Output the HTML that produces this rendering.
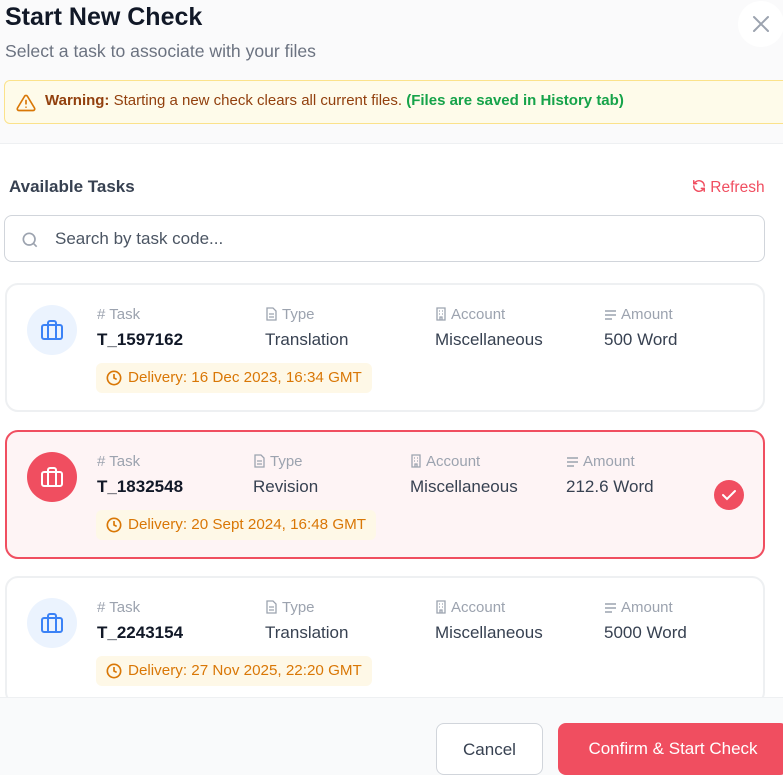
<!DOCTYPE html>
<html><head><style>
*{box-sizing:border-box;margin:0;padding:0}
body{width:783px;height:775px;overflow:hidden;font-family:"Liberation Sans",sans-serif;background:#fff;position:relative}
.hdr{position:absolute;left:0;top:0;width:783px;height:144px;background:#fafafb;border-bottom:1px solid #eef0f2}
h1{position:absolute;left:5px;top:3px;font-size:25px;font-weight:700;color:#111827}
.sub{position:absolute;left:5px;top:41px;font-size:17.6px;color:#6b7280}
.close{position:absolute;left:738px;top:1px;width:46px;height:46px;border-radius:50%;background:#fff}
.warn{position:absolute;left:4px;top:80px;width:785px;height:44px;background:#fefbea;border:1px solid #fbe28b;border-radius:6px;font-size:15px;color:#92400e}
.warn span.t{position:absolute;left:40px;top:11px;white-space:nowrap}
.at{position:absolute;left:9px;top:177px;font-size:17px;font-weight:700;color:#374151}
.ref{position:absolute;left:692px;top:179px;font-size:15.5px;color:#f04e60}
.search{position:absolute;left:4px;top:215px;width:761px;height:47px;border:1px solid #d1d5db;border-radius:8px}
.search span{position:absolute;left:50px;top:13px;font-size:17px;color:#4b5563}
.card{position:absolute;left:5px;width:760px;height:129px;border:2px solid #eef0f2;border-radius:13px;background:#fff}
.card.sel{background:#fef4f5;border-color:#f04e60}
.ic{position:absolute;left:20px;top:20px;width:50px;height:50px;border-radius:50%;background:#ebf3fe}
.sel .ic{background:#f04e60}
.ic svg{position:absolute;left:13px;top:13px}
.lab{position:absolute;top:21px;font-size:15px;color:#9ca3af;white-space:nowrap}
.lab svg{vertical-align:-2px;margin-right:4px}
.val{position:absolute;top:45px;font-size:17px;color:#374151;white-space:nowrap}
.val.b{font-weight:700;color:#111827}
.del{position:absolute;left:89px;top:78px;height:30px;padding:0 10px 0 32px;background:#fef8e7;border-radius:6px;font-size:15.2px;color:#d97706;line-height:30px;white-space:nowrap}
.del svg{position:absolute;left:10px;top:7px}
.foot{position:absolute;left:0;top:697px;width:783px;height:78px;background:#f9fafb;border-top:1px solid #eef0f2}
.btn{position:absolute;top:25px;height:52px;border-radius:8px;font-size:17px;line-height:52px;text-align:center}
</style></head><body>
<div class="hdr">
<h1>Start New Check</h1>
<div class="sub">Select a task to associate with your files</div>
<div class="close"><svg width="46" height="46"><path d="M16 16L30 30M30 16L16 30" stroke="#9ca3af" stroke-width="2" stroke-linecap="round"/></svg></div>
<div class="warn"><svg style="position:absolute;left:11px;top:12px" width="20" height="20" viewBox="0 0 24 24" fill="none" stroke="#d97706" stroke-width="2" stroke-linecap="round" stroke-linejoin="round"><path d="M10.3 3.9L1.8 18a2 2 0 0 0 1.7 3h17a2 2 0 0 0 1.7-3L13.7 3.9a2 2 0 0 0-3.4 0z"/><path d="M12 9v4M12 17h.01"/></svg><span class="t"><b>Warning:</b> Starting a new check clears all current files. <b style="color:#16a34a">(Files are saved in History tab)</b></span></div>
</div>
<div class="at">Available Tasks</div>
<div class="ref"><svg width="14" height="14" viewBox="0 0 24 24" fill="none" stroke="#f04e60" stroke-width="2.5" stroke-linecap="round" style="vertical-align:-1px"><path d="M21 12a9 9 0 0 0-15-6.7L3 8M3 3v5h5M3 12a9 9 0 0 0 15 6.7L21 16M21 21v-5h-5"/></svg> Refresh</div>
<div class="search"><svg style="position:absolute;left:15px;top:14px" width="20" height="20" viewBox="0 0 24 24" fill="none" stroke="#9ca3af" stroke-width="2"><circle cx="11" cy="11" r="7"/><path d="M20 20l-4-4"/></svg><span>Search by task code...</span></div>

<div class="card" style="top:283px">
<div class="ic"><svg width="24" height="24" viewBox="0 0 24 24" fill="none" stroke="#3b82f6" stroke-width="2" stroke-linejoin="round"><rect x="2" y="7" width="20" height="14" rx="2"/><path d="M16 21V5a2 2 0 0 0-2-2h-4a2 2 0 0 0-2 2v16"/></svg></div>
<div class="lab" style="left:90px"># Task</div><div class="val b" style="left:90px">T_1597162</div>
<div class="lab" style="left:258px"><svg width="13" height="14" viewBox="0 0 13 14" fill="none" stroke="#9ca3af" stroke-width="1.3"><path d="M2 1h6l3 3v9H2z M4 7h5M4 10h5"/></svg>Type</div><div class="val" style="left:258px">Translation</div>
<div class="lab" style="left:428px"><svg width="12" height="14" viewBox="0 0 12 14" fill="none" stroke="#9ca3af" stroke-width="1.3"><path d="M2 1h8v12H2z M4 4h1M7 4h1M4 7h1M7 7h1M5 13v-3h2v3"/></svg>Account</div><div class="val" style="left:428px">Miscellaneous</div>
<div class="lab" style="left:597px"><svg width="13" height="12" viewBox="0 0 13 12" stroke="#9ca3af" stroke-width="1.4"><path d="M1 2h11M1 6h11M1 10h7"/></svg>Amount</div><div class="val" style="left:597px">500 Word</div>
<div class="del"><svg width="16" height="16" viewBox="0 0 24 24" fill="none" stroke="#d97706" stroke-width="2.5"><circle cx="12" cy="12" r="10"/><path d="M12 6v6l4 2"/></svg>Delivery: 16 Dec 2023, 16:34 GMT</div>
</div>

<div class="card sel" style="top:430px">
<div class="ic"><svg width="24" height="24" viewBox="0 0 24 24" fill="none" stroke="#fff" stroke-width="2" stroke-linejoin="round"><rect x="2" y="7" width="20" height="14" rx="2"/><path d="M16 21V5a2 2 0 0 0-2-2h-4a2 2 0 0 0-2 2v16"/></svg></div>
<div class="lab" style="left:90px"># Task</div><div class="val b" style="left:90px">T_1832548</div>
<div class="lab" style="left:246px"><svg width="13" height="14" viewBox="0 0 13 14" fill="none" stroke="#9ca3af" stroke-width="1.3"><path d="M2 1h6l3 3v9H2z M4 7h5M4 10h5"/></svg>Type</div><div class="val" style="left:246px">Revision</div>
<div class="lab" style="left:403px"><svg width="12" height="14" viewBox="0 0 12 14" fill="none" stroke="#9ca3af" stroke-width="1.3"><path d="M2 1h8v12H2z M4 4h1M7 4h1M4 7h1M7 7h1M5 13v-3h2v3"/></svg>Account</div><div class="val" style="left:403px">Miscellaneous</div>
<div class="lab" style="left:559px"><svg width="13" height="12" viewBox="0 0 13 12" stroke="#9ca3af" stroke-width="1.4"><path d="M1 2h11M1 6h11M1 10h7"/></svg>Amount</div><div class="val" style="left:559px">212.6 Word</div>
<svg style="position:absolute;left:706px;top:47px" width="32" height="32"><circle cx="16" cy="16" r="15" fill="#f04e60"/><path d="M10 16l4 4 8-8" stroke="#fff" stroke-width="2" fill="none" stroke-linecap="round"/></svg>
<div class="del"><svg width="16" height="16" viewBox="0 0 24 24" fill="none" stroke="#d97706" stroke-width="2.5"><circle cx="12" cy="12" r="10"/><path d="M12 6v6l4 2"/></svg>Delivery: 20 Sept 2024, 16:48 GMT</div>
</div>

<div class="card" style="top:576px">
<div class="ic"><svg width="24" height="24" viewBox="0 0 24 24" fill="none" stroke="#3b82f6" stroke-width="2" stroke-linejoin="round"><rect x="2" y="7" width="20" height="14" rx="2"/><path d="M16 21V5a2 2 0 0 0-2-2h-4a2 2 0 0 0-2 2v16"/></svg></div>
<div class="lab" style="left:90px"># Task</div><div class="val b" style="left:90px">T_2243154</div>
<div class="lab" style="left:258px"><svg width="13" height="14" viewBox="0 0 13 14" fill="none" stroke="#9ca3af" stroke-width="1.3"><path d="M2 1h6l3 3v9H2z M4 7h5M4 10h5"/></svg>Type</div><div class="val" style="left:258px">Translation</div>
<div class="lab" style="left:428px"><svg width="12" height="14" viewBox="0 0 12 14" fill="none" stroke="#9ca3af" stroke-width="1.3"><path d="M2 1h8v12H2z M4 4h1M7 4h1M4 7h1M7 7h1M5 13v-3h2v3"/></svg>Account</div><div class="val" style="left:428px">Miscellaneous</div>
<div class="lab" style="left:597px"><svg width="13" height="12" viewBox="0 0 13 12" stroke="#9ca3af" stroke-width="1.4"><path d="M1 2h11M1 6h11M1 10h7"/></svg>Amount</div><div class="val" style="left:597px">5000 Word</div>
<div class="del"><svg width="16" height="16" viewBox="0 0 24 24" fill="none" stroke="#d97706" stroke-width="2.5"><circle cx="12" cy="12" r="10"/><path d="M12 6v6l4 2"/></svg>Delivery: 27 Nov 2025, 22:20 GMT</div>
</div>

<div class="foot">
<div class="btn" style="left:436px;width:107px;background:#fff;border:1px solid #d1d5db;color:#374151">Cancel</div>
<div class="btn" style="left:558px;width:230px;background:#f04e60;color:#fff">Confirm &amp; Start Check</div>
</div>
</body></html>
